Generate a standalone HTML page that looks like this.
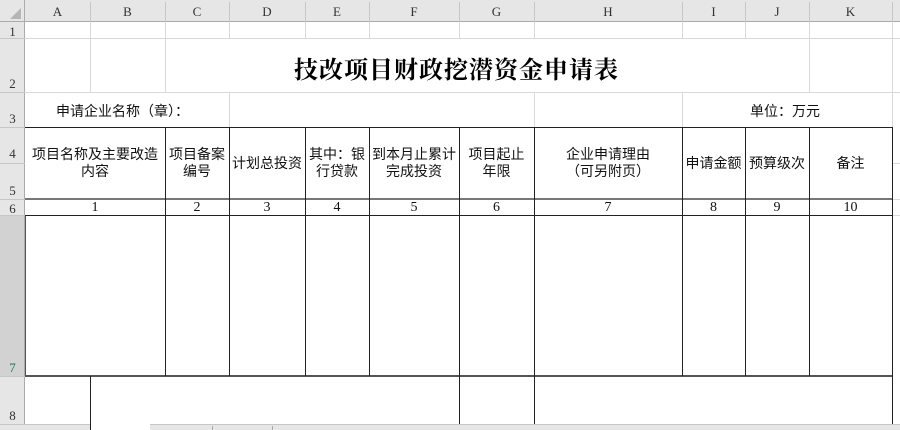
<!DOCTYPE html>
<html><head><meta charset="utf-8"><style>
body{margin:0;width:900px;height:430px;overflow:hidden;background:#fff;position:relative;font-family:"Liberation Sans","Noto Sans CJK SC",sans-serif;}
div{position:absolute;box-sizing:border-box;}
.g{background:#d9d9d9;}
.b{background:#222;}
.hd{background:#e6e6e6;}
.ch{top:0;height:22px;font:13px "Liberation Serif","Noto Serif CJK SC",serif;color:#333;text-align:center;line-height:23px;}
.rh{left:0;width:25px;font:13px "Liberation Serif",serif;color:#333;text-align:center;}
.t{font-size:14px;color:#111;text-align:center;line-height:17px;display:flex;align-items:center;justify-content:center;white-space:nowrap;}
.n{font-size:14px;font-family:'Liberation Serif',serif;}
</style></head><body>
<div class="hd" style="left:0;top:0;width:900px;height:22px"></div>
<div class="hd" style="left:0;top:0;width:25px;height:425px"></div>
<div style="left:0;top:215px;width:25px;height:161px;background:#d2d2d2"></div>
<div style="left:24px;top:215px;width:2px;height:161px;background:#217346"></div>
<div style="left:10px;top:8px;width:0;height:0;border-left:11px solid transparent;border-bottom:11px solid #b5b5b5"></div>
<div style="left:0;top:21px;width:900px;height:1px;background:#ababab"></div>
<div style="left:24px;top:0;width:1px;height:425px;background:#ababab"></div>
<div style="left:90px;top:2px;width:1px;height:20px;background:#c6c6c6"></div>
<div style="left:165px;top:2px;width:1px;height:20px;background:#c6c6c6"></div>
<div style="left:229px;top:2px;width:1px;height:20px;background:#c6c6c6"></div>
<div style="left:305px;top:2px;width:1px;height:20px;background:#c6c6c6"></div>
<div style="left:369px;top:2px;width:1px;height:20px;background:#c6c6c6"></div>
<div style="left:459px;top:2px;width:1px;height:20px;background:#c6c6c6"></div>
<div style="left:534px;top:2px;width:1px;height:20px;background:#c6c6c6"></div>
<div style="left:682px;top:2px;width:1px;height:20px;background:#c6c6c6"></div>
<div style="left:745px;top:2px;width:1px;height:20px;background:#c6c6c6"></div>
<div style="left:809px;top:2px;width:1px;height:20px;background:#c6c6c6"></div>
<div style="left:892px;top:2px;width:1px;height:20px;background:#c6c6c6"></div>
<div class="ch" style="left:25px;width:65px">A</div>
<div class="ch" style="left:90px;width:75px">B</div>
<div class="ch" style="left:165px;width:64px">C</div>
<div class="ch" style="left:229px;width:76px">D</div>
<div class="ch" style="left:305px;width:64px">E</div>
<div class="ch" style="left:369px;width:90px">F</div>
<div class="ch" style="left:459px;width:75px">G</div>
<div class="ch" style="left:534px;width:148px">H</div>
<div class="ch" style="left:682px;width:63px">I</div>
<div class="ch" style="left:745px;width:64px">J</div>
<div class="ch" style="left:809px;width:83px">K</div>
<div class="rh" style="top:24px">1</div>
<div class="rh" style="top:76px">2</div>
<div class="rh" style="top:111px">3</div>
<div class="rh" style="top:146px">4</div>
<div class="rh" style="top:183px">5</div>
<div class="rh" style="top:201px">6</div>
<div class="rh" style="top:360px;color:#217346">7</div>
<div class="rh" style="top:408px">8</div>
<div style="left:0;top:38px;width:25px;height:1px;background:#c6c6c6"></div>
<div style="left:0;top:92px;width:25px;height:1px;background:#c6c6c6"></div>
<div style="left:0;top:127px;width:25px;height:1px;background:#c6c6c6"></div>
<div style="left:0;top:163px;width:25px;height:1px;background:#c6c6c6"></div>
<div style="left:0;top:199px;width:25px;height:1px;background:#c6c6c6"></div>
<div style="left:0;top:215px;width:25px;height:1px;background:#c6c6c6"></div>
<div style="left:0;top:376px;width:25px;height:1px;background:#c6c6c6"></div>
<div class="g" style="left:25px;top:38px;width:875px;height:1px"></div>
<div class="g" style="left:25px;top:92px;width:875px;height:1px"></div>
<div class="g" style="left:892px;top:22px;width:1px;height:105px"></div>
<div class="g" style="left:892px;top:163px;width:8px;height:1px"></div>
<div class="g" style="left:892px;top:199px;width:8px;height:1px"></div>
<div class="g" style="left:892px;top:215px;width:8px;height:1px"></div>
<div class="g" style="left:90px;top:22px;width:1px;height:70px"></div>
<div class="g" style="left:165px;top:22px;width:1px;height:70px"></div>
<div class="g" style="left:229px;top:22px;width:1px;height:16px"></div>
<div class="g" style="left:305px;top:22px;width:1px;height:16px"></div>
<div class="g" style="left:369px;top:22px;width:1px;height:16px"></div>
<div class="g" style="left:459px;top:22px;width:1px;height:16px"></div>
<div class="g" style="left:534px;top:22px;width:1px;height:16px"></div>
<div class="g" style="left:682px;top:22px;width:1px;height:16px"></div>
<div class="g" style="left:745px;top:22px;width:1px;height:16px"></div>
<div class="g" style="left:809px;top:22px;width:1px;height:70px"></div>
<div class="g" style="left:229px;top:92px;width:1px;height:35px"></div>
<div class="g" style="left:534px;top:92px;width:1px;height:35px"></div>
<div class="g" style="left:682px;top:92px;width:1px;height:35px"></div>
<div style="left:294px;top:50px;white-space:nowrap;font:bold 24px 'Liberation Serif','Noto Serif CJK SC',serif;color:#000;letter-spacing:1px">技改项目财政挖潜资金申请表</div>
<div style="left:56px;top:101px;font-size:14px;color:#111">申请企业名称（章）：</div>
<div style="left:750px;top:101px;font-size:14px;color:#111">单位：万元</div>
<div class="b" style="left:25px;top:127px;width:868px;height:1px"></div>
<div style="left:25px;top:198px;width:868px;height:2px;background:#777"></div>
<div class="b" style="left:25px;top:215px;width:868px;height:1px"></div>
<div style="left:25px;top:375px;width:868px;height:2px;background:#555"></div>
<div class="b" style="left:165px;top:127px;width:1px;height:249px"></div>
<div class="b" style="left:229px;top:127px;width:1px;height:249px"></div>
<div class="b" style="left:305px;top:127px;width:1px;height:249px"></div>
<div class="b" style="left:369px;top:127px;width:1px;height:249px"></div>
<div class="b" style="left:459px;top:127px;width:1px;height:298px"></div>
<div class="b" style="left:534px;top:127px;width:1px;height:298px"></div>
<div class="b" style="left:682px;top:127px;width:1px;height:249px"></div>
<div class="b" style="left:745px;top:127px;width:1px;height:249px"></div>
<div class="b" style="left:809px;top:127px;width:1px;height:249px"></div>
<div class="b" style="left:892px;top:127px;width:1px;height:298px"></div>
<div class="b" style="left:90px;top:376px;width:1px;height:54px"></div>
<div class="t" style="left:25px;top:128px;width:140px;height:70px">项目名称及主要改造<br>内容</div>
<div class="t" style="left:165px;top:128px;width:64px;height:70px">项目备案<br>编号</div>
<div class="t" style="left:229px;top:128px;width:76px;height:70px">计划总投资</div>
<div class="t" style="left:305px;top:128px;width:64px;height:70px">其中：银<br>行贷款</div>
<div class="t" style="left:369px;top:128px;width:90px;height:70px">到本月止累计<br>完成投资</div>
<div class="t" style="left:459px;top:128px;width:75px;height:70px">项目起止<br>年限</div>
<div class="t" style="left:534px;top:128px;width:148px;height:70px">企业申请理由<br>（可另附页）</div>
<div class="t" style="left:682px;top:128px;width:63px;height:70px">申请金额</div>
<div class="t" style="left:745px;top:128px;width:64px;height:70px">预算级次</div>
<div class="t" style="left:809px;top:128px;width:83px;height:70px">备注</div>
<div class="t n" style="left:25px;top:200px;width:140px;height:15px">1</div>
<div class="t n" style="left:165px;top:200px;width:64px;height:15px">2</div>
<div class="t n" style="left:229px;top:200px;width:76px;height:15px">3</div>
<div class="t n" style="left:305px;top:200px;width:64px;height:15px">4</div>
<div class="t n" style="left:369px;top:200px;width:90px;height:15px">5</div>
<div class="t n" style="left:459px;top:200px;width:75px;height:15px">6</div>
<div class="t n" style="left:534px;top:200px;width:148px;height:15px">7</div>
<div class="t n" style="left:682px;top:200px;width:63px;height:15px">8</div>
<div class="t n" style="left:745px;top:200px;width:64px;height:15px">9</div>
<div class="t n" style="left:809px;top:200px;width:83px;height:15px">10</div>
<div style="left:0;top:424px;width:90px;height:6px;background:#e6e6e6;border-top:1px solid #c6c6c6"></div>
<div style="left:150px;top:424px;width:750px;height:6px;background:#e6e6e6;border-top:1px solid #c6c6c6"></div>
<div style="left:212px;top:426px;width:1px;height:4px;background:#aaa"></div>
<div style="left:272px;top:426px;width:1px;height:4px;background:#aaa"></div>
</body></html>
